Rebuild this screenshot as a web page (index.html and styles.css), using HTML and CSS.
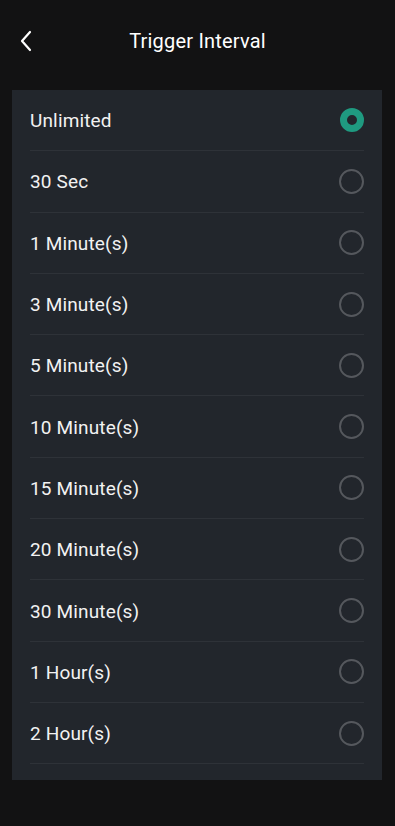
FILE: index.html
```html
<!DOCTYPE html>
<html lang="en">
<head>
    <meta charset="UTF-8">
    <meta name="viewport" content="width=device-width, initial-scale=1.0">
    <title>Trigger Interval</title>
    <link rel="stylesheet" href="styles.css">
</head>
<body>
    <header class="top-bar">
        <a class="back" href="#">
            <svg width="14" height="22" viewBox="0 0 14 22"><path d="M11 2 L3 11 L11 20" fill="none" stroke="#fff" stroke-width="2.2" stroke-linecap="round" stroke-linejoin="round"/></svg>
        </a>
        <h1>Trigger Interval</h1>
    </header>

    <!-- Interval options -->
    <ul class="option-list">
        <li class="option selected"><span>Unlimited</span><i class="radio"></i></li>
        <li class="option"><span>30 Sec</span><i class="radio"></i></li>
        <li class="option"><span>1 Minute(s)</span><i class="radio"></i></li>
        <li class="option"><span>3 Minute(s)</span><i class="radio"></i></li>
        <li class="option"><span>5 Minute(s)</span><i class="radio"></i></li>
        <li class="option"><span>10 Minute(s)</span><i class="radio"></i></li>
        <li class="option"><span>15 Minute(s)</span><i class="radio"></i></li>
        <li class="option"><span>20 Minute(s)</span><i class="radio"></i></li>
        <li class="option"><span>30 Minute(s)</span><i class="radio"></i></li>
        <li class="option"><span>1 Hour(s)</span><i class="radio"></i></li>
        <li class="option"><span>2 Hour(s)</span><i class="radio"></i></li>
    </ul>
</body>
</html>
```

FILE: styles.css
```css
/* General */
body {
    margin: 0;
    padding: 0;
    background-color: #121213;
    color: #f2f2f2;
    font-family: Roboto, "Noto Sans", sans-serif;
    min-height: 826px;
}

/* Header */
.top-bar {
    position: relative;
    height: 82px;
    display: flex;
    align-items: center;
    justify-content: center;
}

.top-bar h1 {
    margin: 0;
    font-size: 20px;
    font-weight: 400;
    color: #fff;
    letter-spacing: 0.2px;
}

.back {
    position: absolute;
    left: 19px;
    top: 30px;
    display: block;
    line-height: 0;
}

/* Option list */
.option-list {
    list-style: none;
    margin: 8px 13px 0 12px;
    padding: 0 18px 16px 18px;
    background-color: #22262c;
}

.option {
    height: 60.3px;
    display: flex;
    align-items: center;
    justify-content: space-between;
    border-bottom: 1px solid #2e3238;
    font-size: 19px;
    letter-spacing: 0.15px;
}

.option span {
    padding-top: 1px;
}

.radio {
    width: 21px;
    height: 21px;
    border: 2px solid #55585d;
    border-radius: 50%;
    box-sizing: content-box;
}

.option.selected .radio {
    width: 10px;
    height: 10px;
    border: 7.5px solid #1f9a80;
    background-color: #22262c;
}
```
